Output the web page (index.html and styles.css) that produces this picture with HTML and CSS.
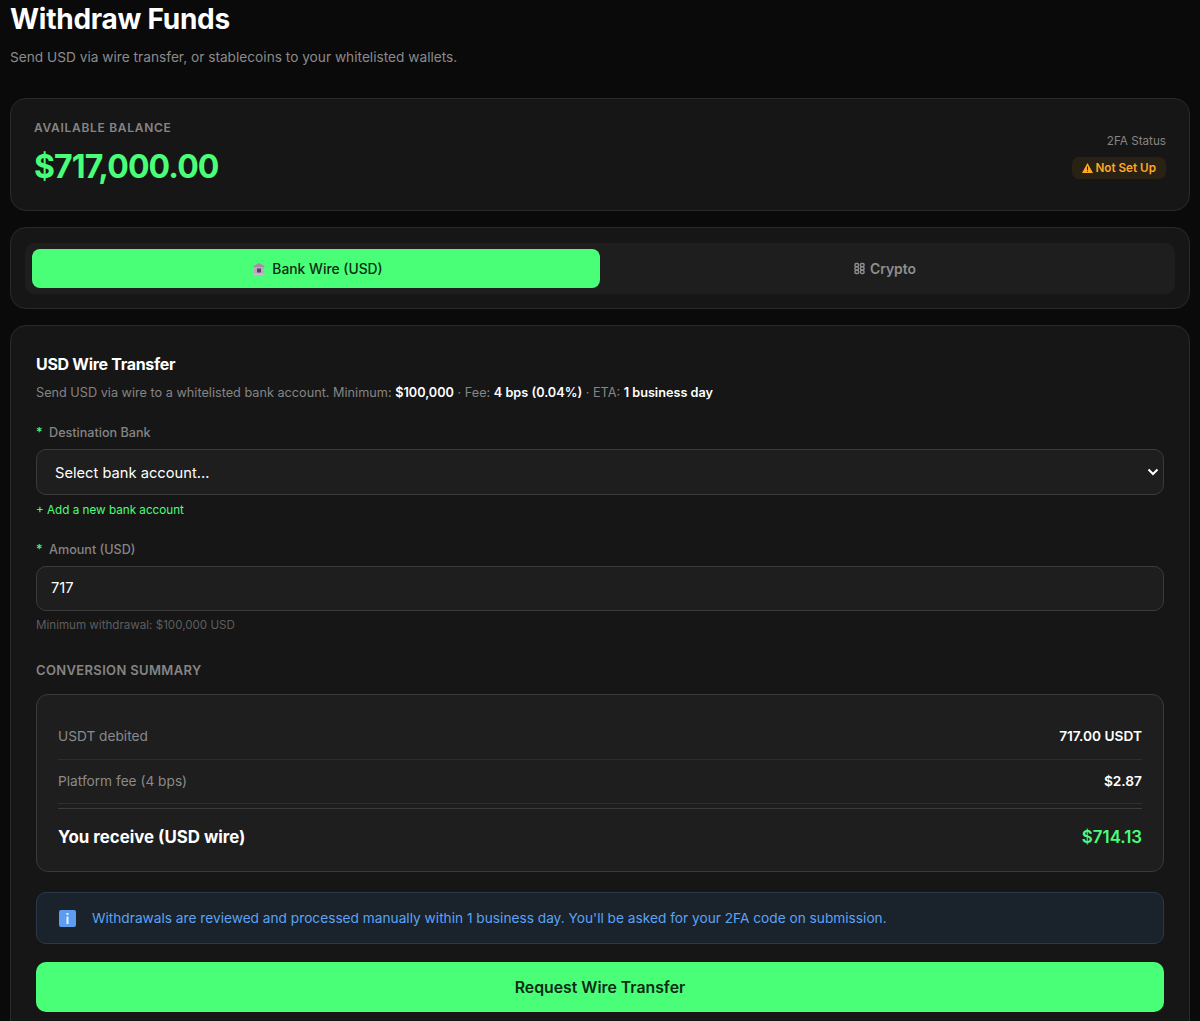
FILE: index.html
```html
<!DOCTYPE html>
<html lang="en">

<head>
  <meta charset="UTF-8">
  <title>Withdraw Funds</title>
  <meta name="viewport" content="width=device-width, initial-scale=1.0">
  <link rel="stylesheet" href="styles.css">
</head>

<body>

  <div class="page">
    <div class="page-header">
      <h1>Withdraw Funds</h1>
      <p>Send USD via wire transfer, or stablecoins to your whitelisted wallets.</p>
    </div>

    <div class="card balance-card">
      <div>
        <div class="balance-label">AVAILABLE BALANCE</div>
        <div class="balance-value">$717,000.00</div>
      </div>
      <div class="twofa">
        <div class="twofa-label">2FA Status</div>
        <span class="badge">
          <svg width="11" height="10" viewBox="0 0 22 20"><path d="M11 0 L22 20 H0 Z" fill="#ffa726"/><path d="M10 7h2v7h-2zM10 15.500h2v2h-2z" fill="#2a2115"/></svg>
          Not Set Up
        </span>
      </div>
    </div>

    <div class="card tabs-card">
      <div class="tabs">
        <button class="tab active">
          <svg width="12" height="12" viewBox="0 0 12 12"><path d="M6 0 L11.500 3 V4 H.5 V3 Z" fill="#a98aa8"/><rect x="1" y="4" width="10" height="7" fill="#bca6c0"/><rect x="4" y="5.500" width="4" height="4" fill="#5b3f63"/><rect x=".5" y="10.500" width="11" height="1.500" fill="#c9b8cc"/></svg>
          Bank Wire (USD)
        </button>
        <button class="tab">
          <svg width="11" height="13" viewBox="0 0 12 13" fill="none" stroke="#8f8f8f" stroke-width="1.500"><rect x="1" y="1" width="4" height="3.500" rx="1.500"/><rect x="7" y="1" width="4" height="3.500" rx="1.500"/><rect x="1" y="4.700" width="4" height="3.500" rx="1.500"/><rect x="7" y="4.700" width="4" height="3.500" rx="1.500"/><rect x="1" y="8.500" width="4" height="3.500" rx="1.500"/><rect x="7" y="8.500" width="4" height="3.500" rx="1.500"/></svg>
          Crypto
        </button>
      </div>
    </div>

    <div class="card form-card">
      <h2>USD Wire Transfer</h2>
      <p class="form-desc">Send USD via wire to a whitelisted bank account. Minimum: <strong>$100,000</strong> · Fee: <strong>4 bps (0.04%)</strong> · ETA: <strong>1 business day</strong></p>

      <label class="field-label" for="bank"><span class="req">*</span>Destination Bank</label>
      <div class="select-wrap">
        <select id="bank" class="field select-field">
          <option>Select bank account...</option>
        </select>
        <svg class="chevron" width="12" height="8" viewBox="0 0 12 8" fill="none" stroke="#fff" stroke-width="2"><path d="M1.500 1.500 L6 6 L10.500 1.500"/></svg>
      </div>
      <a class="add-link" href="#">+ Add a new bank account</a>

      <label class="field-label amount-label" for="amount"><span class="req">*</span>Amount (USD)</label>
      <input id="amount" class="field amount-field" type="text" value="717">
      <div class="hint">Minimum withdrawal: $100,000 USD</div>

      <h3 class="summary-title">CONVERSION SUMMARY</h3>
      <div class="summary">
        <div class="summary-row first">
          <span>USDT debited</span>
          <strong>717.00 USDT</strong>
        </div>
        <div class="summary-row">
          <span>Platform fee (4 bps)</span>
          <strong>$2.87</strong>
        </div>
        <div class="summary-row total">
          <span>You receive (USD wire)</span>
          <strong>$714.13</strong>
        </div>
      </div>

      <div class="notice">
        <svg width="17" height="17" viewBox="0 0 17 17"><rect width="17" height="17" rx="2" fill="#5c9df0"/><rect x="7.500" y="3" width="2" height="2" fill="#e8f1fd"/><rect x="7.500" y="6.500" width="2" height="7.500" fill="#e8f1fd"/></svg>
        <span>Withdrawals are reviewed and processed manually within 1 business day. You'll be asked for your 2FA code on submission.</span>
      </div>

      <button class="submit">Request Wire Transfer</button>
    </div>
  </div>

</body>

</html>
```

FILE: styles.css
```css
* {
  box-sizing: border-box;
  margin: 0;
  padding: 0;
}

html,
body {
  height: 100vh;
  overflow: hidden;
}

body {
  font-family: Inter, 'Liberation Sans', sans-serif;
  background: #0a0a0a;
  color: #fff;
}

.page {
  padding: 0 10px;
}

.page-header {
  height: 98px;
}

h1 {
  font-size: 28px;
  line-height: 38px;
  font-weight: 700;
  letter-spacing: -0.25px;
}

.page-header p {
  margin-top: 2px;
  font-size: 13.7px;
  line-height: 34px;
  height: 34px;
  color: #8a8a8a;
}

.card {
  background: #161616;
  border: 1px solid #2a2a2a;
  border-radius: 16px;
  margin-bottom: 16px;
}

.balance-card {
  height: 113px;
  padding: 0 23px 3px;
  display: flex;
  justify-content: space-between;
  align-items: center;
}

.balance-label {
  font-size: 12px;
  font-weight: 600;
  letter-spacing: 0.7px;
  color: #858585;
}

.balance-value {
  margin-top: 12px;
  font-size: 32px;
  line-height: 40px;
  font-weight: 700;
  letter-spacing: -0.9px;
  color: #4aff78;
}

.twofa {
  display: flex;
  flex-direction: column;
  align-items: flex-end;
  gap: 6px;
  margin-top: 4px;
}

.twofa-label {
  font-size: 11.7px;
  line-height: 20px;
  color: #858585;
}

.badge {
  display: flex;
  align-items: center;
  gap: 2px;
  height: 22px;
  padding: 0 10px;
  border-radius: 7px;
  background: #2a2115;
  color: #ffa726;
  font-size: 11.7px;
  font-weight: 600;
}

.tabs-card {
  height: 82px;
  padding: 15px 14px;
}

.tabs {
  display: flex;
  height: 51px;
  padding: 6px 7px;
  gap: 0;
  border-radius: 10px;
  background: #1e1e1e;
}

.tab {
  flex: 1 1 50%;
  height: 39px;
  padding-left: 2px;
  display: flex;
  align-items: center;
  justify-content: center;
  gap: 5px;
  border: none;
  border-radius: 8px;
  background: none;
  color: #8f8f8f;
  font-family: inherit;
  font-size: 13.9px;
  font-weight: 600;
}

.tab.active {
  padding-left: 4px;
  gap: 7px;
  background: #4aff78;
  color: #0d2b14;
  font-size: 13.85px;
  font-weight: 500;
}

.form-card {
  height: 720px;
  padding: 26px 25px;
}

h2 {
  font-size: 16px;
  line-height: 24px;
  font-weight: 700;
  letter-spacing: -0.3px;
}

.form-desc {
  margin-top: 6px;
  font-size: 12.7px;
  line-height: 22px;
  color: #858585;
}

.form-desc strong {
  color: #fff;
  font-weight: 600;
}

.field-label {
  display: block;
  margin-top: 19px;
  font-size: 12.6px;
  line-height: 20px;
  font-weight: 500;
  color: #858585;
}

.req {
  color: #4aff78;
  margin-right: 6.500px;
}

.field {
  display: block;
  width: 100%;
  background: #1e1e1e;
  border: 1px solid #3a3a3a;
  border-radius: 10px;
  color: #fff;
  font-family: inherit;
  font-size: 14.700px;
}

.select-wrap {
  position: relative;
  margin-top: 6px;
}

.select-field {
  height: 46px;
  padding: 1px 18px 0;
  appearance: none;
}

.chevron {
  position: absolute;
  right: 5px;
  top: 19px;
}

.amount-field {
  height: 45px;
  margin-top: 6px;
  padding: 0 14px 2px;
}

.add-link {
  display: block;
  margin-top: 6px;
  font-size: 11.7px;
  line-height: 18px;
  color: #4aff78;
  text-decoration: none;
}

.amount-label {
  margin-top: 21px;
}

.hint {
  margin-top: 5px;
  font-size: 11.6px;
  line-height: 18px;
  color: #5e5e5e;
}

.summary-title {
  margin-top: 27px;
  font-size: 13px;
  line-height: 18px;
  font-weight: 600;
  letter-spacing: 0.35px;
  color: #858585;
}

.summary {
  margin-top: 15px;
  height: 178px;
  padding: 19px 21px 0;
  background: #1e1e1e;
  border: 1px solid #3a3a3a;
  border-radius: 12px;
}

.summary-row {
  display: flex;
  justify-content: space-between;
  align-items: center;
  height: 44px;
  padding-bottom: 2px;
  border-bottom: 1px solid #2e2e2e;
  font-size: 13.7px;
  color: #8a8a8a;
}

.summary-row.first {
  height: 46px;
}

.summary-row strong {
  color: #fff;
  font-weight: 600;
}

.summary-row.total {
  height: 57px;
  margin-top: 4px;
  padding-bottom: 0;
  border-top: 1px solid #3a3a3a;
  border-bottom: none;
  font-size: 16.85px;
  font-weight: 700;
  color: #fff;
}

.summary-row.total strong {
  color: #4aff78;
}

.notice {
  display: flex;
  align-items: center;
  gap: 16px;
  height: 52px;
  margin-top: 20px;
  padding: 0 22px;
  background: #1a222b;
  border: 1px solid #2b3a4a;
  border-radius: 10px;
  font-size: 13.7px;
  color: #5ba4f5;
}

.submit {
  display: block;
  width: 100%;
  height: 50px;
  margin-top: 18px;
  border: none;
  border-radius: 10px;
  background: #4aff78;
  color: #0d2b14;
  font-family: inherit;
  font-size: 15.8px;
  font-weight: 600;
}
```
